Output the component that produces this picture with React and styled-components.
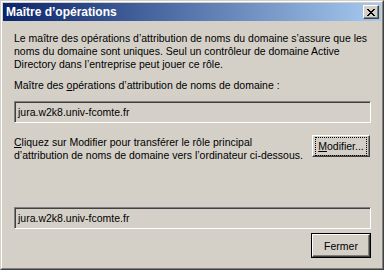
import React from 'react';
import styled, { createGlobalStyle } from 'styled-components';

const GlobalStyle = createGlobalStyle`
  html, body {
    margin: 0;
    padding: 0;
    background: #d4d0c8;
  }
  body {
    font-family: "Liberation Sans", Arial, sans-serif;
    font-size: 10.5px;
    color: #000;
  }
`;

const Window = styled.div`
  width: 384px;
  height: 270px;
  box-sizing: border-box;
  background: #d4d0c8;
  border-top: 1px solid #d4d0c8;
  border-left: 1px solid #d4d0c8;
  border-right: 1px solid #404040;
  border-bottom: 1px solid #404040;
  display: flex;
  flex-direction: column;
`;

const Frame = styled.div`
  flex: 1;
  display: flex;
  flex-direction: column;
  border-top: 1px solid #fff;
  border-left: 1px solid #fff;
  border-right: 1px solid #808080;
  border-bottom: 1px solid #808080;
  padding: 1px;
`;

const TitleBar = styled.div`
  height: 18px;
  display: flex;
  align-items: center;
  justify-content: space-between;
  padding: 0 2px 0 3px;
  background: linear-gradient(to right, #0a246a, #a6caf0);
  color: #fff;
  font-weight: bold;
  font-size: 12px;
  white-space: nowrap;
`;

const CloseBox = styled.div`
  width: 16px;
  height: 14px;
  box-sizing: border-box;
  background: #d4d0c8;
  border-top: 1px solid #fff;
  border-left: 1px solid #fff;
  border-right: 1px solid #404040;
  border-bottom: 1px solid #404040;
  box-shadow: inset -1px -1px 0 #808080;
  display: flex;
  align-items: center;
  justify-content: center;
`;

const Body = styled.div`
  flex: 1;
  display: flex;
  flex-direction: column;
  padding: 11px 10px 0 11px;
`;

const Text = styled.div`
  line-height: 13px;
  white-space: nowrap;
  margin-top: ${p => p.$top || 0}px;
`;

const Key = styled.span`
  text-decoration: underline;
`;

const Field = styled.div`
  height: 22px;
  box-sizing: border-box;
  margin-top: ${p => p.$top || 0}px;
  border-top: 1px solid #808080;
  border-left: 1px solid #808080;
  border-right: 1px solid #fff;
  border-bottom: 1px solid #fff;
  box-shadow: inset 1px 1px 0 #404040, inset -1px -1px 0 #d4d0c8;
  padding: 0 3px;
  display: flex;
  align-items: center;
  white-space: nowrap;
`;

const Row = styled.div`
  display: flex;
  justify-content: space-between;
  align-items: flex-start;
  margin-top: ${p => p.$top || 0}px;
`;

const Button = styled.div`
  width: 60px;
  height: ${p => (p.$default ? 25 : 24)}px;
  box-sizing: border-box;
  background: #d4d0c8;
  border: 1px solid ${p => (p.$default ? '#000' : 'transparent')};
  display: flex;
  margin-top: ${p => p.$top || 0}px;
`;

const ButtonFace = styled.div`
  flex: 1;
  display: flex;
  align-items: center;
  justify-content: center;
  border-top: 1px solid #fff;
  border-left: 1px solid #fff;
  border-right: 1px solid #404040;
  border-bottom: 1px solid #404040;
  box-shadow: inset -1px -1px 0 #808080;
`;

const Focus = styled.span`
  outline: 1px dotted #000;
  outline-offset: 0;
  padding: 2px 2px;
  line-height: 13px;
  white-space: nowrap;
`;

const Footer = styled.div`
  display: flex;
  justify-content: flex-end;
  margin-top: 4px;
`;

export default function App() {
  return (
    <>
      <GlobalStyle />
      <Window>
        <Frame>
          <TitleBar>
            <span>Maître d’opérations</span>
            <CloseBox>
              <svg width="8" height="7" viewBox="0 0 8 7">
                <path d="M0 0L7 7M1 0L8 7M7 0L0 7M8 0L1 7" stroke="#000" strokeWidth="1" />
              </svg>
            </CloseBox>
          </TitleBar>
          <Body>
            <Text>
              Le maître des opérations d’attribution de noms du domaine s’assure que les
              <br />
              noms du domaine sont uniques. Seul un contrôleur de domaine Active
              <br />
              Directory dans l’entreprise peut jouer ce rôle.
            </Text>
            <Text $top={8}>
              Maître des <Key>o</Key>pérations d’attribution de noms de domaine :
            </Text>
            <Field $top={9}>jura.w2k8.univ-fcomte.fr</Field>
            <Row $top={11}>
              <Text $top={2}>
                <Key>C</Key>liquez sur Modifier pour transférer le rôle principal
                <br />
                d’attribution de noms de domaine vers l’ordinateur ci-dessous.
              </Text>
              <Button>
                <ButtonFace>
                  <Focus>
                    <Key>M</Key>odifier...
                  </Focus>
                </ButtonFace>
              </Button>
            </Row>
            <Field $top={45}>jura.w2k8.univ-fcomte.fr</Field>
            <Footer>
              <Button $default>
                <ButtonFace>Fermer</ButtonFace>
              </Button>
            </Footer>
          </Body>
        </Frame>
      </Window>
    </>
  );
}
